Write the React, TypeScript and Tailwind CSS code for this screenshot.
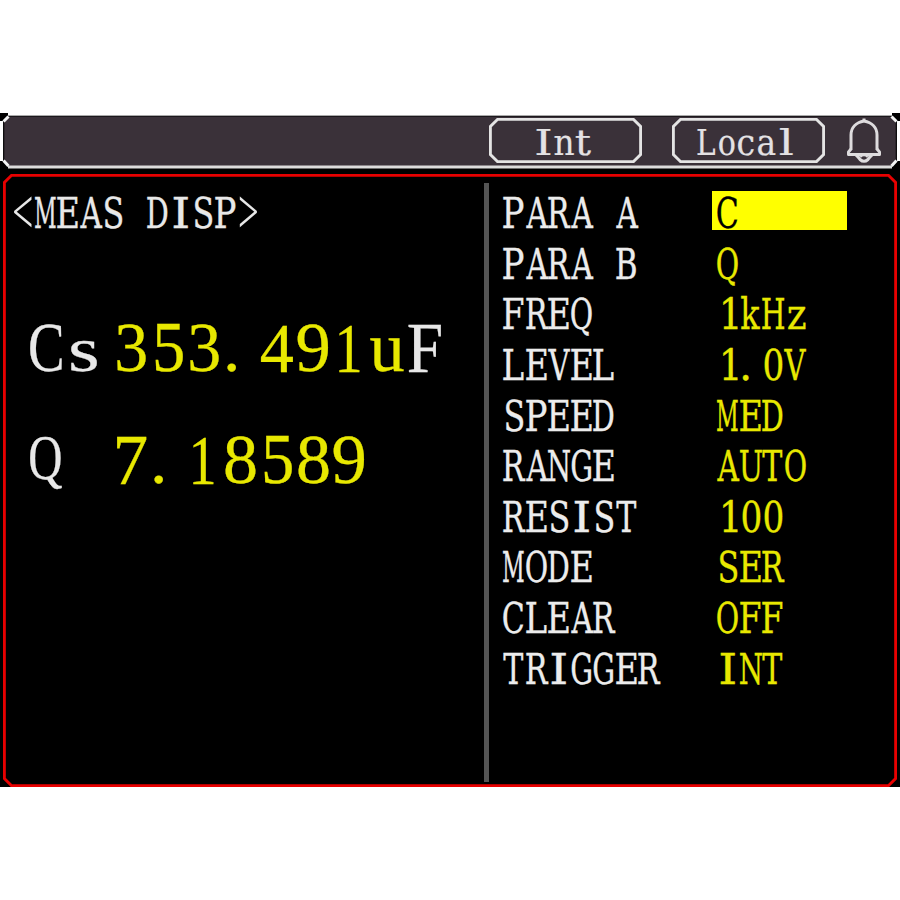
import React from "react";

const U = 2.8125;

type Box = [number, number, number?, number?];

// ink extents of each glyph inside an 8 x 11 cell: left, right, top, bottom
const GLYPHS: Record<string, Box> = {
  A: [0, 8], B: [0, 7.2], C: [0, 7.3], D: [0, 7.3], E: [0, 7.4], F: [0, 7.3],
  G: [0.2, 7.3], H: [0, 8], I: [1.2, 6.4], L: [0, 7.3], M: [0, 7.5], N: [0, 8],
  O: [0, 7.4], P: [0, 7.3], Q: [0, 7.4], R: [0, 8], S: [1, 7.3], T: [0, 7.3],
  U: [0, 8], V: [0, 8], k: [0.2, 7.2], z: [1, 7.4], "0": [0.9, 7.3],
  "1": [2, 7.3], ".": [1, 3.2], "<": [0.7, 6.9, 11.2, 0], ">": [1, 7.3, 11.2, 0],
};

// button labels, cell of 7
const LABEL: Record<string, Box> = {
  I: [0.5, 5.5], n: [-0.2, 6.8], t: [0.5, 6.2], L: [0.1, 6.4], o: [0.7, 6.3],
  c: [0.7, 6.3], a: [0.7, 7], l: [1.2, 6],
};

// large readout, cell of 13
const LARGE: Record<string, Box> = {
  C: [0.6, 12.3, 17.2, -0.2], s: [1.9, 11.5, 11.2, -0.2], Q: [0.6, 12.3, 17.2, -2.2],
  "3": [1.2, 11.5, 17.1, -0.2], "5": [1.4, 11.5, 17.1, -0.2], ".": [1.1, 4.3, 3, 0],
  "4": [0.2, 11.7, 17, 0], "9": [0.2, 11.3, 17.1, -0.2], "1": [2, 9.6, 17, 0],
  u: [-0.2, 12, 12, 0], F: [0.2, 12.3, 17, 0], "7": [1, 11.8, 17, 0],
  "8": [0.4, 11.4, 17.1, -0.2],
};

const ctx = document.createElement("canvas").getContext("2d")!;

interface CellTextProps {
  text: string;
  table: Record<string, Box>;
  font: string;
  size: number;
  pitch: number;
  height: number;
  baseline: number;
  stroke?: number;
}

function CellText({ text, table, font, size, pitch, height, baseline, stroke = 0 }: CellTextProps) {
  ctx.font = `${size}px ${font}`;
  const line = ctx.measureText("x");
  const asc = line.fontBoundingBoxAscent;
  const base = (height - asc - line.fontBoundingBoxDescent) / 2 + asc;
  // ink is measured at 10x so the extents are not rounded to whole pixels
  ctx.font = `${size * 10}px ${font}`;
  return (
    <span
      className="inline-block whitespace-pre align-top"
      style={{ fontFamily: font, fontSize: size, lineHeight: `${height}px`, height, WebkitTextStroke: `${stroke}px currentColor` }}
    >
      {text.split("").map((ch, i) => {
        const m = ctx.measureText(ch);
        const left = m.actualBoundingBoxLeft / 10;
        const right = m.actualBoundingBoxRight / 10;
        const up = m.actualBoundingBoxAscent / 10;
        const down = m.actualBoundingBoxDescent / 10;
        const box = table[ch];
        let transform = "none";
        let width = pitch;
        if (box) {
          const [x0, x1, y1, y0] = box;
          const sx = ((x1 - x0) * U - stroke) / (right + left);
          let sy = 1;
          let ty = baseline - base;
          if (y1 !== undefined && y0 !== undefined) {
            sy = ((y1 - y0) * U - stroke) / (up + down);
            ty += up * sy - y1 * U + stroke / 2;
          }
          const tx = x0 * U + left * sx + stroke / 2;
          transform = `translate(${tx}px, ${ty}px) scale(${sx}, ${sy})`;
          width = right;
        }
        return (
          <span
            key={i}
            className="inline-block align-top"
            style={{ width, marginRight: pitch - width, height, transform, transformOrigin: `0 ${base}px` }}
          >
            {ch}
          </span>
        );
      })}
    </span>
  );
}

const SmallText = ({ text }: { text: string }) => (
  <CellText text={text} table={GLYPHS} font='"DejaVu Serif", serif' size={42.5} pitch={22.5} height={39.375} baseline={37} stroke={0.3} />
);

const Bracket = ({ text }: { text: string }) => (
  <CellText text={text} table={GLYPHS} font='"Liberation Serif", serif' size={34} pitch={22.5} height={39.375} baseline={37} />
);

const LabelText = ({ text }: { text: string }) => (
  <CellText text={text} table={LABEL} font='"DejaVu Serif", serif' size={34.5} pitch={19.6875} height={38} baseline={37} stroke={0.2} />
);

const LargeText = ({ text }: { text: string }) => (
  <CellText text={text} table={LARGE} font='"Liberation Serif", serif' size={72} pitch={36.5625} height={60} baseline={53} stroke={0.3} />
);

const params = [
  { name: "PARA A", value: "C", active: true },
  { name: "PARA B", value: "Q" },
  { name: "FREQ", value: "1kHz" },
  { name: "LEVEL", value: "1.0V" },
  { name: "SPEED", value: "MED" },
  { name: "RANGE", value: "AUTO" },
  { name: "RESIST", value: "100" },
  { name: "MODE", value: "SER" },
  { name: "CLEAR", value: "OFF" },
  { name: "TRIGGER", value: "INT" },
];

function Frame({ w, h, color, fill }: { w: number; h: number; color: string; fill: string }) {
  return (
    <svg className="absolute inset-0 h-full w-full" viewBox={`0 0 ${w} ${h}`} preserveAspectRatio="none">
      <path
        d={`M3 .5H${w - 3}L${w - 0.5} 3V${h - 3}L${w - 3} ${h - 0.5}H3L.5 ${h - 3}V3Z`}
        fill={fill}
        stroke={color}
      />
    </svg>
  );
}

function Bell() {
  return (
    <svg className="h-[46px] w-[36px]" viewBox="0 0 36 46" fill="none" stroke="#dedcde" strokeWidth="3" strokeLinejoin="round">
      <path d="M5 32V17C5 9.500 10 4.500 18 3C26 4.500 31 9.500 31 17V32" />
      <path d="M18 .5V4" />
      <path d="M5 31L2.500 34V36.500H33.500V34L31 31" />
      <path d="M10 37Q12 38.500 14 41.500Q18 45 22 41.500Q24 38.500 26 37M14 38.500Q18 35 22 38.500" />
    </svg>
  );
}

export default function App() {
  return (
    <div className="h-[900px] w-[900px] overflow-hidden bg-white pt-[113px]">
      <div className="flex h-[674px] w-[900px] flex-col bg-black">
        {/* Status bar */}
        <header className="relative h-[56px] w-[900px] shrink-0">
          <svg className="absolute inset-0 h-full w-full" viewBox="0 0 900 56">
            <path d="M8 0H892V2H8ZM0 8H3V48H0ZM897 8H900V48H897Z" fill="#fff" />
            <path d="M9 3H891L896 9V48L891 53H9L4 48V9Z" fill="#3a3139" />
            <path d="M8 2.500H892" stroke="#aaa" />
            <path d="M8 3.500H892M4 8V48M896 8V48" stroke="#1c181c" />
            <path d="M3.500 8.500L8.500 3.500M3.500 47.500L8.500 53M896.500 8.500L891.500 3.500M896.500 47.500L891.500 53" stroke="#f4f4f4" strokeWidth="3" />
            <path d="M8 54H892" stroke="#dcdcdc" strokeWidth="3" />
          </svg>
          <div className="relative flex h-full items-start justify-end pr-[18px] pt-[5px] text-[#e4e2e4]">
            <div className="relative mr-[30px] h-[45px] w-[153px] pl-[46px]">
              <Frame w={54} h={16} color="#e4e4e4" fill="none" />
              <LabelText text="Int" />
            </div>
            <div className="relative mr-[21px] h-[45px] w-[153px] pl-[25px]">
              <Frame w={54} h={16} color="#e4e4e4" fill="none" />
              <LabelText text="Local" />
            </div>
            <Bell />
          </div>
        </header>

        {/* Main display */}
        <main className="relative ml-[3px] mt-[5px] h-[613px] w-[894px]">
          <Frame w={318} h={218} color="#e80000" fill="#000" />
          <div className="relative flex h-full">
            <section className="w-[481px] pl-[9px] pt-[17px] text-[#e8e8e8]">
              <div className="h-[40px] whitespace-nowrap">
                <Bracket text="<" />
                <SmallText text="MEAS DISP" />
                <Bracket text=">" />
              </div>
              <div className="mt-[88px] flex h-[60px] pl-[16px]">
                <div className="w-[86px]"><LargeText text="Cs" /></div>
                <span className="text-[#e8e800]"><LargeText text="353.491u" /></span>
                <LargeText text="F" />
              </div>
              <div className="mt-[52px] flex h-[60px] pl-[16px]">
                <div className="w-[86px]"><LargeText text="Q" /></div>
                <span className="text-[#e8e800]"><LargeText text="7.18589" /></span>
              </div>
            </section>
            <div className="mt-[9px] h-[599px] w-[5px] bg-[#555]" />
            <section className="flex flex-col gap-[11.25px] pl-[14px] pt-[17px]">
              {params.map((p) => (
                <div key={p.name} className="flex h-[39.375px]">
                  <div className="w-[209px] text-[#ececec]">
                    <SmallText text={p.name} />
                  </div>
                  <div className={`w-[135px] pl-[5px] ${p.active ? "bg-[#ff0] text-black" : "text-[#e8e800]"}`}>
                    <SmallText text={p.value} />
                  </div>
                </div>
              ))}
            </section>
          </div>
        </main>
      </div>
    </div>
  );
}
